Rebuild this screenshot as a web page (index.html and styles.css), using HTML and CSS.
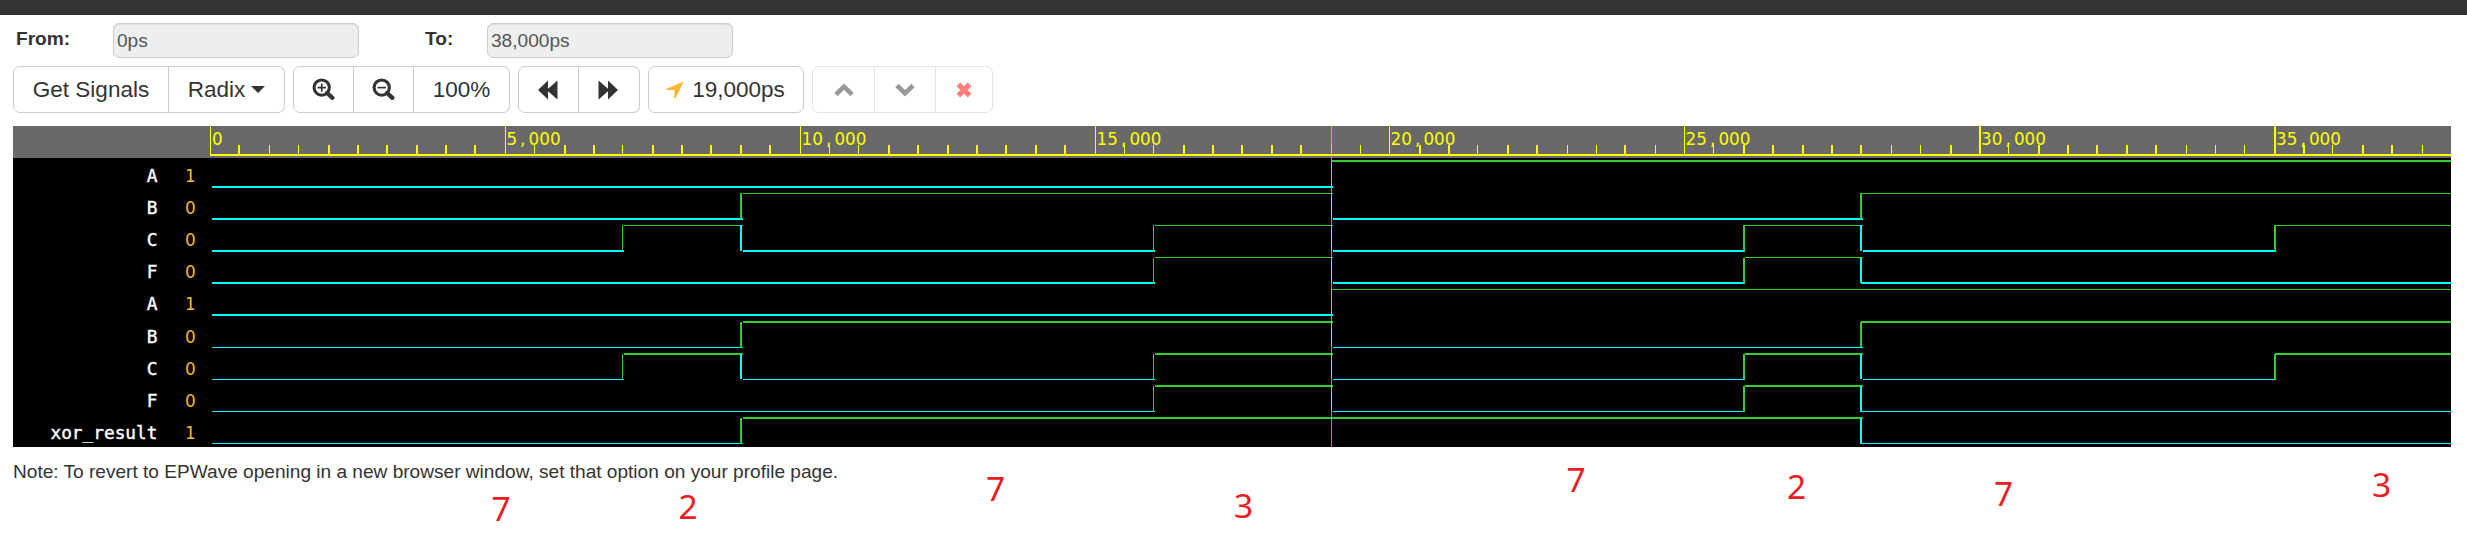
FILE: index.html
```
<!DOCTYPE html>
<html lang="en">
<head>
<meta charset="utf-8">
<title>EPWave</title>
<link rel="stylesheet" href="styles.css">
</head>
<body>
<div class="navbar"></div>
<main class="page">
  <form class="range">
    <label class="range-label from">From:</label><div class="field">0ps</div>
    <label class="range-label to">To:</label><div class="field">38,000ps</div>
  </form>
  <div class="toolbar">
    <div class="group">
      <button class="btn w-signals"><span class="t-signals">Get Signals</span></button><button class="btn w-radix"><span>Radix</span><i class="caret"></i></button>
    </div>
    <div class="group">
      <button class="btn w-in"><svg class="zoom-icon" width="23" height="23" viewBox="0 0 22 22"><circle cx="9.3" cy="9.2" r="7.3" fill="none" stroke="#333" stroke-width="3"/><path d="M14.5 14.3L19.5 19" stroke="#333" stroke-width="4" stroke-linecap="round"/><path d="M5.3 9.2h8M9.3 5.2v8" stroke="#333" stroke-width="1.6"/></svg></button><button class="btn w-out"><svg class="zoom-icon" width="23" height="23" viewBox="0 0 22 22"><circle cx="9.3" cy="9.2" r="7.3" fill="none" stroke="#333" stroke-width="3"/><path d="M14.5 14.3L19.5 19" stroke="#333" stroke-width="4" stroke-linecap="round"/><path d="M5.3 9.2h8" stroke="#333" stroke-width="1.6"/></svg></button><button class="btn w-full">100%</button>
    </div>
    <div class="group">
      <button class="btn w-seek"><svg width="20" height="20" viewBox="0 0 20 20"><path d="M0 10L10 .5v8.2L19.5.5v19L10 11.3v8.2z" fill="#333"/></svg></button><button class="btn w-seek"><svg class="fwd" width="20" height="20" viewBox="0 0 20 20"><path d="M20 10L10 .5v8.2L.5.5v19L10 11.3v8.2z" fill="#333"/></svg></button>
    </div>
    <div class="group">
      <button class="btn w-cursor"><svg class="arrow" width="18" height="18" viewBox="0 0 18 18"><path d="M17.6.4L9.5 17.4H8.4V9H.3V7.9z" fill="#ffb52e"/></svg><span class="t-cursor">19,000ps</span></button>
    </div>
    <div class="group disabled">
      <button class="btn w-up"><svg width="20" height="14" viewBox="0 0 20 14"><path d="M2 11.5L10 3.7l8 7.8" fill="none" stroke="#333" stroke-width="4.6"/></svg></button><button class="btn w-down"><svg width="20" height="14" viewBox="0 0 20 14"><path d="M2 2.5l8 7.8 8-7.8" fill="none" stroke="#333" stroke-width="4.6"/></svg></button><button class="btn w-close"><svg width="16" height="16" viewBox="0 0 16 16"><path d="M2.4 2.4l11.2 11.2M13.6 2.4L2.4 13.6" stroke="#f00" stroke-width="5.2"/></svg></button>
    </div>
  </div>
  <svg class="wave" width="2438" height="321" viewBox="13 126 2438 321" shape-rendering="crispEdges">
    <rect x="13" y="126" width="2438" height="321" fill="#000"/>
    <rect x="13" y="126" width="2438" height="32" fill="#696969"/>
    <path class="axis2" d="M210 155H2451"/>
    <path class="tick1" d="M210.5 126V155M505.5 126V154M800.5 126V154M1095.5 126V154M1389.5 126V154M1684.5 126V154M269.5 145v9M298.5 145v9M534.5 145v9M622.5 145v9M829.5 145v9M858.5 145v9M1124.5 145v9M1153.5 145v9M1331.5 145v9M1360.5 145v9M1477.5 145v9M1567.5 145v9M1596.5 145v9M1655.5 145v9M1713.5 145v9M1891.5 145v9M1920.5 145v9M2008.5 145v9M2186.5 145v9M2215.5 145v9M2244.5 145v9M2332.5 145v9M2422.5 145v9"/>
    <path class="tick2" d="M1980 126V154M2275 126V154M239 145v9M329 145v9M358 145v9M387 145v9M417 145v9M446 145v9M475 145v9M565 145v9M594 145v9M653 145v9M682 145v9M711 145v9M741 145v9M770 145v9M889 145v9M918 145v9M948 145v9M977 145v9M1006 145v9M1036 145v9M1065 145v9M1184 145v9M1213 145v9M1242 145v9M1272 145v9M1301 145v9M1420 145v9M1449 145v9M1508 145v9M1537 145v9M1625 145v9M1744 145v9M1773 145v9M1803 145v9M1832 145v9M1861 145v9M1951 145v9M2039 145v9M2068 145v9M2097 145v9M2127 145v9M2156 145v9M2304 145v9M2363 145v9M2392 145v9"/>
    <g class="times">
      <text x="212" y="144.5">0</text>
      <text x="506.5 520 528.6 539.3 550" y="144.5">5,000</text>
      <text x="801.5 812.2 826 834.4 845.1 855.8" y="144.5">10,000</text>
      <text x="1096.5 1107.2 1121 1129.4 1140.1 1150.8" y="144.5">15,000</text>
      <text x="1390.5 1401.2 1415 1423.4 1434.1 1444.8" y="144.5">20,000</text>
      <text x="1685.5 1696.2 1710 1718.4 1729.1 1739.8" y="144.5">25,000</text>
      <text x="1981 1991.7 2005.5 2013.9 2024.6 2035.3" y="144.5">30,000</text>
      <text x="2276 2286.7 2300.5 2308.9 2319.6 2330.3" y="144.5">35,000</text>
    </g>
    <g class="names">
      <text x="157.5" y="182">A</text><text x="157.5" y="214">B</text><text x="157.5" y="246">C</text><text x="157.5" y="278">F</text>
      <text x="157.5" y="310">A</text><text x="157.5" y="343">B</text><text x="157.5" y="375">C</text><text x="157.5" y="407">F</text><text x="157.5" y="438.5">xor_result</text>
    </g>
    <g class="values">
      <text x="185" y="182">1</text><text x="185" y="214">0</text><text x="185" y="246">0</text><text x="185" y="278">0</text>
      <text x="185" y="310">1</text><text x="185" y="343">0</text><text x="185" y="375">0</text><text x="185" y="407">0</text><text x="185" y="439">1</text>
    </g>
    <path class="low w2" d="M212 187H1333M212 219H743M1333 219H1863M212 251H624M743 251H1155M1333 251H1745M1863 251H2276M212 283H1155M1333 283H1745M1861 283H2451M212 315H1333"/>
    <path class="low" d="M212 347.5H743M1333 347.5H1863M212 379.5H624M743 379.5H1155M1333 379.5H1745M1863 379.5H2276M212 411.5H1155M1333 411.5H1745M1861 411.5H2451M212 443.5H743M1861 443.5H2451"/>
    <path class="high w2" d="M1332 161H2451M743 322H1333M1861 322H2451M624 354H743M1155 354H1333M1745 354H1863M2275 354H2451M1155 386H1333M1745 386H1863M743 418H1863"/>
    <path class="high" d="M743 193.5H1333M1861 193.5H2451M624 225.5H743M1155 225.5H1333M1745 225.5H1863M2275 225.5H2451M1155 257.5H1333M1745 257.5H1863M1332 289.5H2451"/>
    <path class="high w2" d="M741 193V219M741 322V348M741 418V444M1744 225V251M1744 258V283M1744 354V379M1744 386V412M1861 193V219M1861 322V347M2275 225V251M2275 354V379"/>
    <path class="high" d="M622.5 225V251M622.5 354V379M1153.5 225V251M1153.5 258V283M1153.5 354V379M1153.5 386V412M1331.5 161V187M1331.5 290V315"/>
    <path class="low w2" d="M741 225V251M741 354V379M1861 225V251M1861 258V283M1861 354V379M1861 386V412M1861 418V444"/>
    <path class="low" d="M1331.5 193V219M1331.5 225V251M1331.5 258V283M1331.5 322V347M1331.5 354V379M1331.5 386V412"/>
    <path class="cursor" d="M1331.5 126V447"/>
  </svg>
  <p class="note">Note: To revert to EPWave opening in a new browser window, set that option on your profile page.</p>
</main>
<svg class="marks" width="2467" height="110" viewBox="0 449 2467 110">
  <text x="491.5" y="521">7</text><text x="678.5" y="519">2</text><text x="986" y="501">7</text><text x="1234" y="518">3</text>
  <text x="1566.5" y="492">7</text><text x="1787" y="499">2</text><text x="1994" y="506">7</text><text x="2372" y="497">3</text>
</svg>
</body>
</html>
```
FILE: styles.css
```
* { box-sizing: border-box; }
body { margin: 0; background: #fff; color: #333; font-family: "Liberation Sans", Arial, sans-serif; height: 559px; overflow: hidden; position: relative; }
.navbar { height: 15px; background: #333; }
.page { padding: 8px 16px 0 13px; }
.range { display: flex; height: 35px; margin: 0; }
.range-label { font-weight: bold; font-size: 19.1px; line-height: 32px; padding-left: 3px; }
.from { width: 100px; }
.to { width: 128px; padding-left: 66px; }
.field { width: 246px; height: 35px; border: 1px solid #ccc; border-radius: 6px; background: #eee; color: #555; font-size: 19.1px; line-height: 33px; padding-left: 3px; box-shadow: inset 0 1px 1px rgba(0,0,0,.075); }
.toolbar { display: flex; gap: 8px; margin-top: 8px; height: 47px; }
.group { display: flex; }
.btn { height: 47px; margin: 0; padding: 0; background: #fff; border: 1px solid #ccc; border-left-width: 0; color: #333; font: 22.5px "Liberation Sans", Arial, sans-serif; display: flex; align-items: center; justify-content: center; white-space: nowrap; }
.btn:first-child { border-left-width: 1px; border-radius: 7px 0 0 7px; }
.btn:last-child { border-radius: 0 7px 7px 0; }
.btn:only-child { border-radius: 7px; }
.disabled .btn { opacity: .5; }
.w-signals { width: 156px; }
.w-radix { width: 116px; gap: 6px; }
.w-in { width: 61px; }
.w-out { width: 60px; }
.w-full { width: 96px; }
.w-seek { width: 61px; padding-right: 2px; }
.w-cursor { width: 156px; gap: 8px; padding-right: 1px; }
.w-up { width: 63px; }
.w-down { width: 61px; }
.w-close { width: 57px; }
.caret { width: 0; height: 0; border: 7px solid transparent; border-top-color: #333; border-bottom-width: 0; }
.wave { display: block; margin-top: 13px; }
.axis2, .tick2 { stroke: #ff0; stroke-width: 2; }
.tick1 { stroke: #ff0; stroke-width: 1; }
.times { fill: #ff0; font: 16.8px "DejaVu Sans", sans-serif; }
.names { fill: #fff; stroke: #fff; stroke-width: .4px; font: 17.8px "DejaVu Sans Mono", monospace; text-anchor: end; }
.values { fill: #ffb52e; font: 16.8px "DejaVu Sans", sans-serif; }
.low { stroke: #0ff; stroke-width: 1; }
.high { stroke: #32cd32; stroke-width: 1; }
.w2 { stroke-width: 2; }
.cursor { stroke: #ffb52e; stroke-width: 1; opacity: .75; }
.note { margin: 11px 0 0; font-size: 19.08px; line-height: 27px; }
.marks { position: absolute; left: 0; top: 449px; }
.marks text { font: 33.5px "Noto Sans", "Open Sans", sans-serif; fill: #ed1c24; }
```
